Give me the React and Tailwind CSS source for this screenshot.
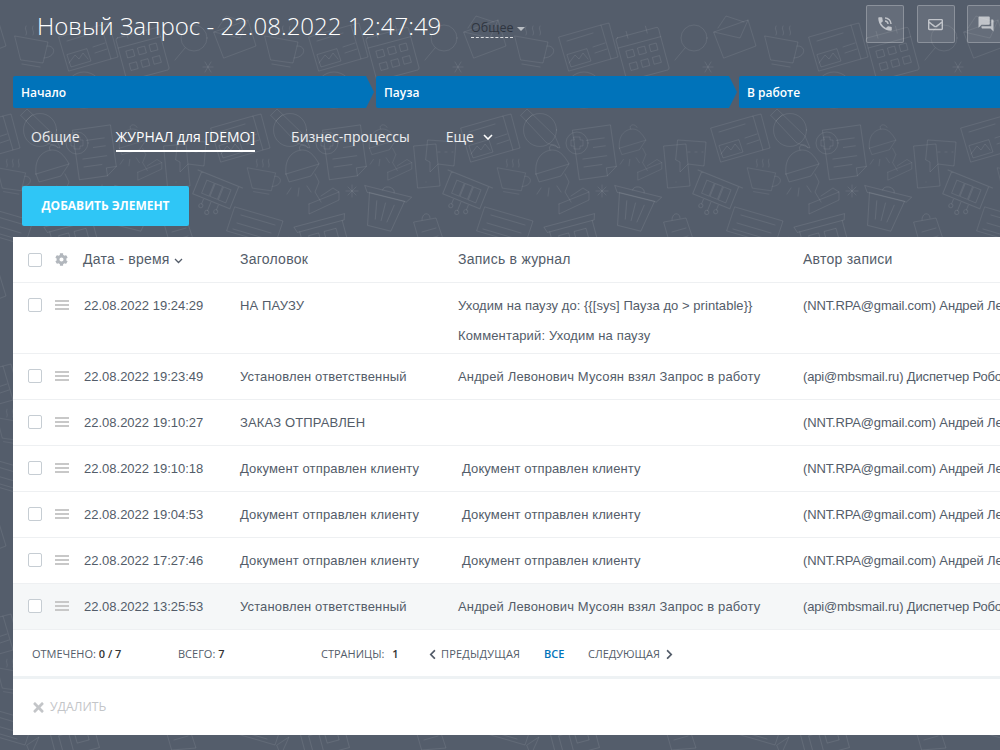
import React from 'react'
import { MdPhoneInTalk, MdForum } from 'react-icons/md'
import { FaRegEnvelope, FaCog, FaTimes, FaChevronLeft, FaChevronRight } from 'react-icons/fa'

const rows = [
  { date: '22.08.2022 19:24:29', title: 'НА ПАУЗУ', entry: 'Уходим на паузу до: {{[sys] Пауза до > printable}}', note: 'Комментарий: Уходим на паузу', author: '(NNT.RPA@gmail.com) Андрей Левонович Мусоян' },
  { date: '22.08.2022 19:23:49', title: 'Установлен ответственный', entry: 'Андрей Левонович Мусоян взял Запрос в работу', author: '(api@mbsmail.ru) Диспетчер Робот' },
  { date: '22.08.2022 19:10:27', title: 'ЗАКАЗ ОТПРАВЛЕН', entry: '', author: '(NNT.RPA@gmail.com) Андрей Левонович Мусоян' },
  { date: '22.08.2022 19:10:18', title: 'Документ отправлен клиенту', entry: 'Документ отправлен клиенту', indent: true, author: '(NNT.RPA@gmail.com) Андрей Левонович Мусоян' },
  { date: '22.08.2022 19:04:53', title: 'Документ отправлен клиенту', entry: 'Документ отправлен клиенту', indent: true, author: '(NNT.RPA@gmail.com) Андрей Левонович Мусоян' },
  { date: '22.08.2022 17:27:46', title: 'Документ отправлен клиенту', entry: 'Документ отправлен клиенту', indent: true, author: '(NNT.RPA@gmail.com) Андрей Левонович Мусоян' },
  { date: '22.08.2022 13:25:53', title: 'Установлен ответственный', entry: 'Андрей Левонович Мусоян взял Запрос в работу', author: '(api@mbsmail.ru) Диспетчер Робот', hover: true },
]

const cup = 'M-17 -12L16 -6L11 15L-11 12ZM15 -2C24 -3 25 9 12 10M-10 16L8 19M-6 -22C-8 -18 -4 -17 -6 -13M1 -22C-1 -18 3 -17 1 -13M8 -22C6 -18 10 -17 8 -13'
const lamp = 'M-17 4C-19 -14 -8 -20 0 -20C8 -20 14 -10 16 -6L-17 4ZM-17 4L-14 12L8 6L16 -6M-3 -20C-6 -25 2 -28 5 -22M-12 18L-16 24M-4 18L-5 26M4 16L8 22M12 4L16 12L12 22L18 32M6 34L36 22L30 18L18 26M6 34V44L36 30V22'
const news = 'M-26 -10L16 -22L26 12L-16 24ZM16 -22L24 -24L33 10L26 12M-18 8L-14 20L6 14L2 2ZM-16 16L-10 8L-6 12L-2 6L3 12M8 0L20 -4M10 6L22 2M-18 -6L8 -14'
const page = 'M-22 -16L26 -2L18 22L-30 8ZM-16 -8L18 2M-20 0L14 10M-24 6L10 16M20 22L32 14L24 32Z'

// doodles behind the page, one 250px tile
function Wallpaper() {
  return (
    <svg className="absolute inset-0" width="1000" height="750">
      <defs>
        <g id="tile" fill="none" stroke="#fff" strokeOpacity="0.09" strokeWidth="0.9" strokeLinejoin="round" strokeLinecap="round">
          <path transform="translate(32 48)" d={cup} />
          <path transform="translate(85 47)" d={news} />
          <g transform="translate(142 52) rotate(-15)">
            <rect x="-22" y="-20" width="44" height="44" rx="2" />
            <path d="M-22 -10H22M-10 -24V-17M10 -24V-17" />
            <path d="M-15 -5h7v7h-7zM-3 -5h7v7h-7zM9 -5h7v7h-7zM-15 8h7v7h-7zM-3 8h7v7h-7zM9 8h7v7h-7z" />
          </g>
          <circle cx="194" cy="38" r="13" />
          <path d="M185 48L175 60" />
          <path d="M214 32L248 20L256 46L224 58ZM214 32L240 38L248 20M218 28L226 16L244 22" />
          <path d="M205 62L211 72M211 62L205 72M203 67H213" />
          <circle cx="84" cy="90" r="18" />
          <path d="M78 98L82 86L92 80L88 92Z" />

          <circle cx="40" cy="130" r="16.5" />
          <path d="M21 115L27 109L55 136L60 148L47 143ZM26 121L32 115" />
          <g transform="translate(90 152) rotate(-8)">
            <path d="M-14 -24H24V18L14 26H-14ZM24 18H14V26M-2 -12H16M4 -4H16M-8 6H16M-8 14H10" />
          </g>
          <circle cx="77" cy="143" r="11" />
          <path d="M74 137H80V140H83V146H80V149H74V146H71V140H74Z" />
          <path transform="translate(133 145) scale(.8)" d={lamp} />
          <path transform="translate(53 170)" d={lamp} />
          <path transform="translate(237 138)" d={news} />
          <path d="M164 146L186 144L190 186L168 188ZM176 182v0M172 152" />
          <path d="M178 140L206 142L204 166L188 164L180 172L180 162L176 160Z" />
          <path d="M188 152H190M195 152H197M202 152H203" />
          <path transform="translate(12 178) scale(.85)" d={cup} />
          <g transform="translate(215 192) rotate(22)">
            <path d="M-24 -14H24M-20 -14V10H20V-14M-12 -8H-4V6H-12ZM-3 -8H5V6H-3ZM6 -8H14V6H6ZM-8 10V16M0 10V20M8 10V16" />
            <circle cx="-8" cy="18" r="2" />
            <circle cx="0" cy="22" r="2" />
            <circle cx="8" cy="18" r="2" />
          </g>
          <g transform="translate(135 205) rotate(14)">
            <path d="M-24 -14H24L20 -8H-20ZM-6 -14C-6 -20 6 -20 6 -14M-18 -8L-12 24H12L18 -8ZM-9 -2L-6 16M0 -2V16M9 -2L6 16" />
          </g>
          <path d="M102 185V197M96 191H108M98 187L106 195M106 187L98 195" />
          <g transform="translate(72 230) rotate(-15)">
            <path d="M-26 -10H26L24 -4H-24ZM-22 -4V24H22V-4M-14 2H-4V24H-14ZM2 2H14V14H2Z" />
          </g>
          <path transform="translate(7 223)" d={page} />
          <path d="M164 222L186 218L196 248L172 250ZM172 220C172 212 180 212 180 218M172 232L186 228M174 240L188 236" />
        </g>
        <pattern id="doodles" width="250" height="250" patternUnits="userSpaceOnUse">
          <use href="#tile" />
          <use href="#tile" x="-250" />
          <use href="#tile" x="250" />
        </pattern>
      </defs>
      <rect width="1000" height="750" fill="url(#doodles)" />
    </svg>
  )
}

function Check() {
  return <span className="block w-[14px] h-[14px] border border-[#c6cdd3] rounded-[2px] bg-white" />
}

function Burger() {
  return (
    <span className="flex flex-col gap-[2px] w-[14px]">
      <span className="h-[2px] bg-[#c8c8c8]" />
      <span className="h-[2px] bg-[#c8c8c8]" />
      <span className="h-[2px] bg-[#c8c8c8]" />
    </span>
  )
}

function IconBox({ children }) {
  return (
    <div className="w-[38px] h-[38px] shrink-0 flex items-center justify-center border border-white/25 bg-white/10 rounded-[2px] text-white/60">
      {children}
    </div>
  )
}

function Stage({ label }) {
  return (
    <div className="h-[32px] w-[361px] shrink-0 bg-[#0073ba] rounded-l-[2px] flex items-center pl-[8px] pt-[1px] text-[12px] font-semibold text-white [clip-path:polygon(0_0,calc(100%-8px)_0,100%_50%,calc(100%-8px)_100%,0_100%)]">
      {label}
    </div>
  )
}

export default function App() {
  return (
    <div className="relative w-[1000px] h-[750px] overflow-hidden bg-[#545d6b] font-['Open_Sans',sans-serif]">
      <Wallpaper />
      <div className="relative">
        <div className="h-[76px] flex">
          <div className="shrink-0 pl-[37px] pt-[9px] text-[24px] leading-[34px] font-light text-white whitespace-nowrap w-[471px]">Новый Запрос - 22.08.2022 12:47:49</div>
          <div className="shrink-0 w-[395px] pt-[19px] flex items-start">
            <span className="text-[12.5px] leading-[18px] text-[#2f3540] border-b border-dashed border-white/80 h-[19px]">Общее</span>
            <span className="ml-[4px] mt-[8px] w-0 h-0 border-x-[4px] border-x-transparent border-t-[4px] border-t-white/60" />
          </div>
          <div className="shrink-0 pt-[5px] flex gap-[12.5px]">
            <IconBox><MdPhoneInTalk size={18} /></IconBox>
            <IconBox><FaRegEnvelope size={15} /></IconBox>
            <IconBox><MdForum size={18} /></IconBox>
          </div>
        </div>

        <div className="ml-[13px] flex gap-[2px]">
          <Stage label="Начало" />
          <Stage label="Пауза" />
          <Stage label="В работе" />
        </div>

        <div className="flex items-start pl-[31px] mt-[19px] text-[14px] leading-[20px] text-white/90 h-[59px]">
          <span className="mr-[36px]">Общие</span>
          <span className="mr-[36px] pb-[3px] border-b-2 border-white text-white">ЖУРНАЛ для [DEMO]</span>
          <span className="mr-[36px]">Бизнес-процессы</span>
          <span className="flex items-center">Еще
            <svg className="ml-[9px]" width="10" height="6" viewBox="0 0 10 6" fill="none" stroke="#fff" strokeWidth="1.6"><path d="M1 1l4 4 4-4" /></svg>
          </span>
        </div>

        <button className="ml-[22px] h-[40px] w-[167px] block bg-[#2fc6f6] rounded-[2px] text-[12px] font-bold text-white">ДОБАВИТЬ ЭЛЕМЕНТ</button>

        <div className="mt-[11px] ml-[13px] bg-white font-['Liberation_Sans',sans-serif] text-[13px] text-[#535c69]">
          <div className="h-[46px] flex items-center border-b border-[#eef0f2] text-[14px] tracking-[0.25px]">
            <div className="shrink-0 w-[42px] pl-[15px]"><Check /></div>
            <div className="shrink-0 w-[28px] text-[#b2b7bd]"><FaCog size={13} /></div>
            <div className="shrink-0 w-[157px] flex items-center">Дата - время
              <svg className="ml-[4px] mt-[2px]" width="9" height="6" viewBox="0 0 9 6" fill="none" stroke="#535c69" strokeWidth="1.3"><path d="M1 1l3.5 3.5L8 1" /></svg>
            </div>
            <div className="shrink-0 w-[218px]">Заголовок</div>
            <div className="shrink-0 w-[345px]">Запись в журнал</div>
            <div className="shrink-0 whitespace-nowrap">Автор записи</div>
          </div>

          {rows.map((row) => (
            <div key={row.date} className={'flex items-start border-b border-[#eef0f2] ' + (row.note ? 'h-[71px] ' : 'h-[46px] ') + (row.hover ? 'bg-[#f5f7f8]' : '')}>
              <div className="shrink-0 w-[42px] pl-[15px] pt-[15px]"><Check /></div>
              <div className="shrink-0 w-[28px] pt-[17px]"><Burger /></div>
              <div className="shrink-0 w-[157px] pt-[15px] pl-[1px] leading-[15px] whitespace-nowrap">{row.date}</div>
              <div className="shrink-0 w-[218px] pt-[15px] leading-[15px] whitespace-nowrap tracking-[0.14px]">{row.title}</div>
              <div className={'shrink-0 w-[345px] pt-[15px] leading-[15px] whitespace-nowrap ' + (row.indent ? 'pl-[4px] tracking-[0.12px]' : row.note ? '' : 'tracking-[0.14px]')}>
                {row.note ? <div className="tracking-[0.05px]">{row.entry}</div> : row.entry}
                {row.note && <div className="mt-[15px] tracking-[0.14px]">{row.note}</div>}
              </div>
              <div className="shrink-0 pt-[15px] leading-[15px] whitespace-nowrap tracking-[-0.15px]">{row.author}</div>
            </div>
          ))}

          <div className="h-[46px] pt-[2px] flex items-center font-['Open_Sans',sans-serif] text-[11px] text-[#535c69]">
            <span className="shrink-0 ml-[19px] w-[146px]">ОТМЕЧЕНО: <b className="font-semibold text-[#333]">0 / 7</b></span>
            <span className="shrink-0 w-[143px]">ВСЕГО: <b className="font-semibold text-[#333]">7</b></span>
            <span className="shrink-0 w-[106px]">СТРАНИЦЫ: <b className="ml-[5px] font-semibold text-[#333]">1</b></span>
            <FaChevronLeft size={11} className="shrink-0" />
            <span className="shrink-0 ml-[3px] w-[103px] tracking-[0.2px]">ПРЕДЫДУЩАЯ</span>
            <span className="shrink-0 w-[44px] font-semibold text-[#0073ba]">ВСЕ</span>
            <span className="shrink-0">СЛЕДУЮЩАЯ</span>
            <FaChevronRight size={11} className="shrink-0 ml-[4px]" />
          </div>
          <div className="h-[3px] bg-[#eef2f4]" />
          <div className="h-[56px] flex items-center pl-[18px] font-['Open_Sans',sans-serif] text-[12.3px] text-[#c3c5c8]">
            <FaTimes size={15} />
            <span className="ml-[4px]">УДАЛИТЬ</span>
          </div>
        </div>
      </div>
    </div>
  )
}
